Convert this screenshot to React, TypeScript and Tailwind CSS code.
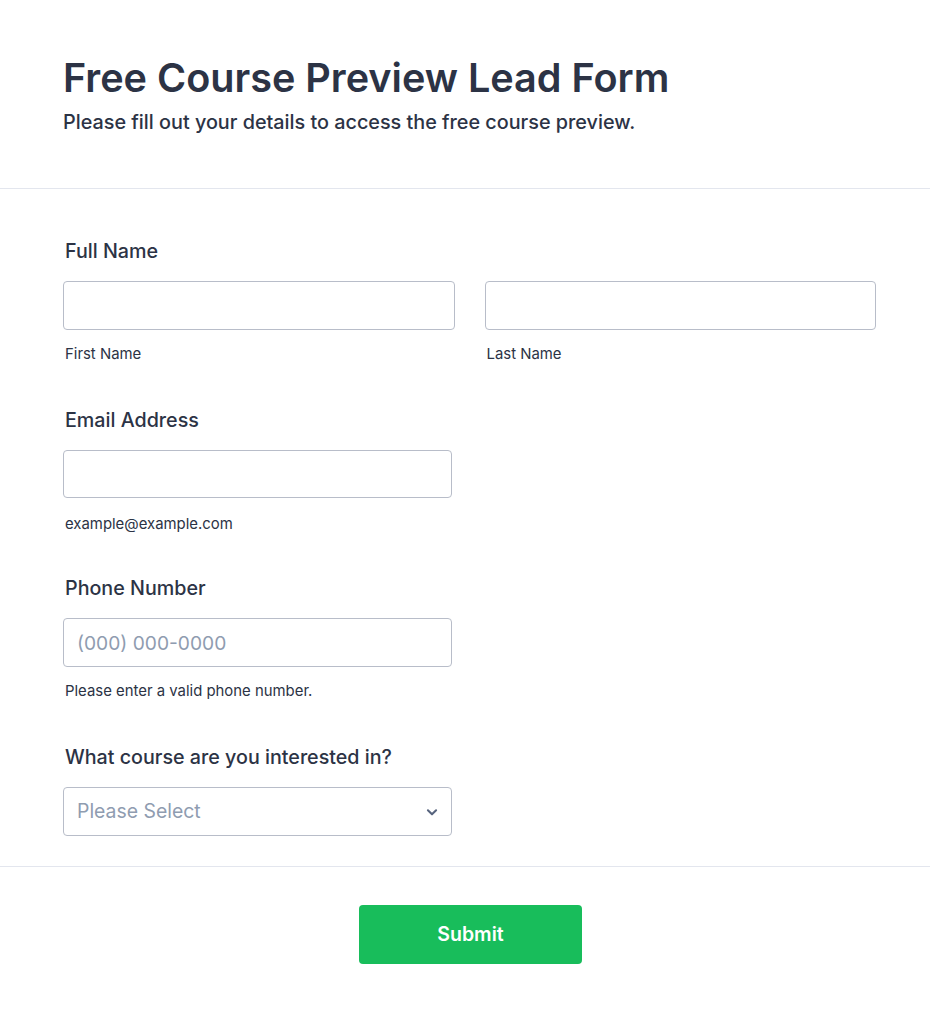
import React from "react";

function Label({ children }: { children: React.ReactNode }) {
  return (
    <div className="h-[24px] pl-[2px] text-[19.7px] leading-[24px] font-medium text-[#2c3345]">
      {children}
    </div>
  );
}

function Sub({ children, extra }: { children: React.ReactNode; extra?: boolean }) {
  return (
    <div
      className={
        extra
          ? "mt-[17px] h-[18px] pl-[2px] text-[14.9px] leading-[18px] text-[#2c3345]"
          : "mt-[15px] h-[18px] pl-[2px] text-[14.9px] leading-[18px] text-[#2c3345]"
      }
    >
      {children}
    </div>
  );
}

function Input({ placeholder }: { placeholder?: string }) {
  return (
    <input
      className="block h-[49px] w-full rounded-[4px] border border-[#b8bdc9] bg-white px-[13px] text-[19.2px] text-[#2c3345] placeholder:text-[#8f9cb0] outline-none"
      placeholder={placeholder}
    />
  );
}

export default function App() {
  return (
    <div
      className="min-h-[1013px] w-full bg-white"
      style={{ fontFamily: "Inter, 'Noto Sans', sans-serif" }}
    >
      <div className="pl-[63px] pt-[56px] pb-[54px]">
        <h1 className="text-[39.6px] leading-[44px] font-semibold text-[#2c3345]">
          Free Course Preview Lead Form
        </h1>
        <p className="mt-[10px] text-[19.8px] leading-[24px] font-medium text-[#2c3345]">
          Please fill out your details to access the free course preview.
        </p>
      </div>
      <div className="h-px w-full bg-[#e3e6ee]" />
      <div className="pl-[63px] pr-[54px] pt-[50px] pb-[30px]">
        <div>
          <Label>Full Name</Label>
          <div className="mt-[18px] grid grid-cols-2 gap-[30px]">
            <div>
              <Input />
              <Sub>First Name</Sub>
            </div>
            <div>
              <Input />
              <Sub>Last Name</Sub>
            </div>
          </div>
        </div>
        <div className="mt-[45px] w-[389px]">
          <Label>Email Address</Label>
          <div className="mt-[18px]">
            <input className="block h-[48px] w-full rounded-[4px] border border-[#b8bdc9] bg-white px-[13px] text-[19.2px] text-[#2c3345] outline-none" />
          </div>
          <Sub extra>example@example.com</Sub>
        </div>
        <div className="mt-[43px] w-[389px]">
          <Label>Phone Number</Label>
          <div className="mt-[18px]">
            <Input placeholder="(000) 000-0000" />
          </div>
          <Sub>Please enter a valid phone number.</Sub>
        </div>
        <div className="mt-[45px] w-[389px]">
          <Label>What course are you interested in?</Label>
          <div className="relative mt-[18px] flex h-[49px] w-full items-center rounded-[4px] border border-[#b8bdc9] bg-white px-[13px]">
            <span className="text-[19.4px] text-[#8f9cb0]">Please Select</span>
            <svg
              className="absolute right-[12px] top-1/2 -translate-y-1/2"
              width="14"
              height="14"
              viewBox="0 0 24 24"
              fill="none"
              stroke="#57647e"
              strokeWidth="3.5"
              strokeLinecap="round"
              strokeLinejoin="round"
            >
              <path d="M5 9l7 7 7-7" />
            </svg>
          </div>
        </div>
      </div>
      <div className="h-px w-full bg-[#e3e6ee]" />
      <div className="flex justify-center pl-[11px] pt-[38px]">
        <button className="h-[59px] w-[223px] rounded-[4px] bg-[#18bd5b] text-[19.5px] font-semibold text-white">
          Submit
        </button>
      </div>
    </div>
  );
}
